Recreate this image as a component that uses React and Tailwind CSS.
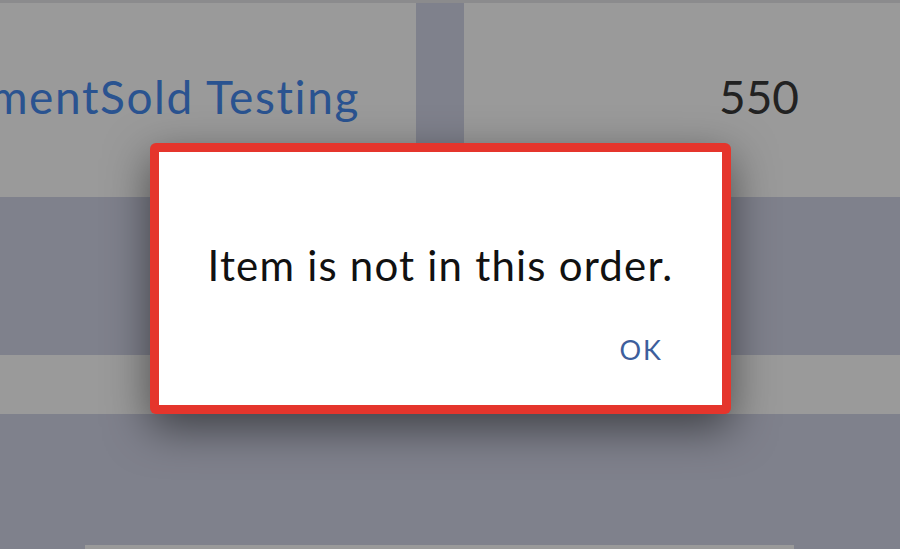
export default function App() {
  return (
    <div className="relative w-[900px] h-[549px] overflow-hidden bg-[#7f818c]" style={{ fontFamily: 'Lato, "Open Sans", sans-serif' }}>
      {/* table underneath */}
      <div className="h-[3px] bg-[#8b8b8d]" />
      <div className="flex h-[194px] gap-[48px]">
        <div className="w-[416px] bg-[#9a9a9a] overflow-hidden flex items-center justify-end pr-[56px] pb-[8px]">
          <span className="whitespace-nowrap text-[46px] tracking-[1.6px] text-[#2a5390]">AdjustmentSold Testing</span>
        </div>
        <div className="flex-1 bg-[#9a9a9a] flex items-center justify-end pr-[101px] pb-[8px]">
          <span className="text-[46px] text-[#222]">550</span>
        </div>
      </div>
      <div className="h-[158px]" />
      <div className="h-[59px] bg-[#9a9a9a]" />
      <div className="h-[131px]" />
      <div className="ml-[85px] w-[709px] h-[4px] bg-[#9a9a9a]" />

      {/* alert */}
      <div className="absolute left-[150px] top-[143px] w-[581px] h-[271px] rounded-[6px] bg-[#e5352c] p-[9px] shadow-[0_14px_44px_rgba(0,0,0,0.5)]">
        <div className="w-full h-full bg-white flex flex-col">
          <div className="pt-[92px] text-center text-[42px] tracking-[1.2px] leading-none text-[#111]">Item is not in this order.</div>
          <div className="flex justify-end pr-[59px] pt-[50px]">
            <span className="text-[27px] leading-none tracking-[2px] text-[#3d5e9c]">OK</span>
          </div>
        </div>
      </div>
    </div>
  );
}
